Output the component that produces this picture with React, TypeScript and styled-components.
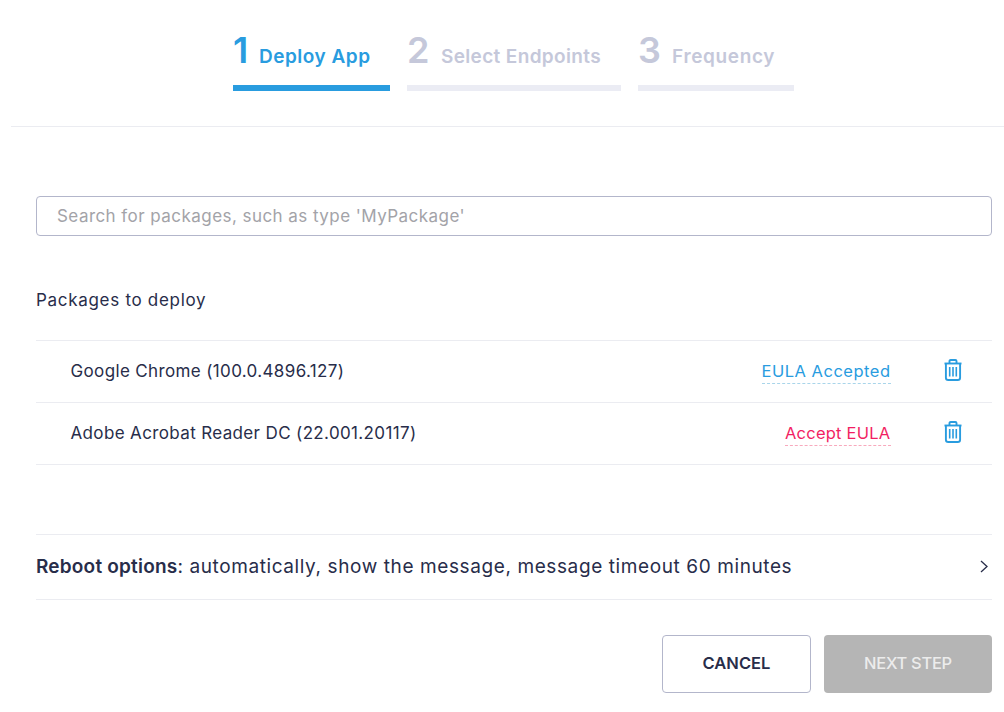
import React from "react";
import styled, { createGlobalStyle } from "styled-components";

const Global = createGlobalStyle`
  html, body { margin: 0; padding: 0; background: #fff; }
  body { font-family: Inter, "Liberation Sans", sans-serif; color: #282d4a; }
  * { box-sizing: border-box; }
`;

const Page = styled.div`
  width: 1004px;
  height: 712px;
  overflow: hidden;
  display: flex;
  flex-direction: column;
`;

const Header = styled.header`
  height: 127px;
  margin-left: 11px;
  border-bottom: 1px solid #ebecf1;
  display: flex;
  gap: 17px;
  padding: 30px 0 0 222px;
`;

const Step = styled.div<{ $w: number; $active?: boolean }>`
  width: ${(p) => p.$w}px;
  height: 61px;
  border-bottom: 6px solid ${(p) => (p.$active ? "#299cdf" : "#ebecf4")};
  color: ${(p) => (p.$active ? "#299cdf" : "#c5c8da")};
  display: flex;
  align-items: flex-start;
  flex-shrink: 0;
`;

const StepNumber = styled.span<{ $w: number }>`
  font-size: 36px;
  line-height: 40px;
  font-weight: 600;
  width: ${(p) => p.$w}px;
  flex-shrink: 0;
`;

const StepLabel = styled.span<{ $ls: number }>`
  font-size: 19px;
  line-height: 24px;
  font-weight: 600;
  margin-top: 15px;
  white-space: nowrap;
  letter-spacing: ${(p) => p.$ls}px;
`;

const Content = styled.main`
  flex: 1;
  padding: 69px 12px 0 36px;
  display: flex;
  flex-direction: column;
`;

const SearchBox = styled.input`
  width: 100%;
  height: 40px;
  border: 1px solid #b3b6cb;
  border-radius: 4px;
  padding: 0 20px;
  font-family: Inter, "Liberation Sans", sans-serif;
  font-size: 17px;
  letter-spacing: 0.45px;
  outline: none;
  &::placeholder { color: #a3a3a8; opacity: 1; }
`;

const SectionTitle = styled.h2`
  margin: 53px 0 29px;
  font-size: 17px;
  line-height: 22px;
  font-weight: 400;
  letter-spacing: 0.7px;
  color: #282d4a;
`;

const PackageList = styled.ul`
  list-style: none;
  margin: 0;
  padding: 0;
  border-top: 1px solid #ebecf1;
`;

const PackageRow = styled.li`
  height: 62px;
  border-bottom: 1px solid #ebecf1;
  display: flex;
  align-items: center;
  padding: 0 30px 2px 34.500px;
`;

const PackageName = styled.span`
  flex: 1;
  font-size: 17px;
  letter-spacing: 0.36px;
  color: #282d4a;
`;

const EulaLink = styled.a<{ $accepted?: boolean }>`
  color: ${(p) => (p.$accepted ? "#299cdf" : "#f21e63")};
  font-size: 16.5px;
  line-height: 20px;
  padding-bottom: 2px;
  letter-spacing: ${(p) => (p.$accepted ? 0.5 : 0.24)}px;
  border-bottom: 1px dashed ${(p) => (p.$accepted ? "#a9d5ea" : "#f8a9bd")};
  margin-right: 53.500px;
  margin-top: 4px;
`;

const TrashButton = styled.button`
  border: 0;
  background: none;
  padding: 0;
  width: 18px;
  height: 22px;
  display: flex;
  color: #299cdf;
  margin-top: -2px;
`;

const RebootRow = styled.div`
  margin-top: 69px;
  height: 66px;
  border-top: 1px solid #ebecf1;
  border-bottom: 1px solid #ebecf1;
  display: flex;
  align-items: center;
  justify-content: space-between;
  font-size: 19px;
  padding-right: 4.500px;
  padding-bottom: 2px;
  color: #282d4a;
  letter-spacing: 0.6px;
  strong { font-weight: 600; letter-spacing: 0.2px; }
`;

const Chevron = styled.svg`
  width: 8px;
  height: 13px;
  color: #282d4a;
`;

const Actions = styled.div`
  margin-top: 35px;
  display: flex;
  justify-content: flex-end;
  gap: 13px;
`;

const Button = styled.button<{ $w: number; $primary?: boolean }>`
  width: ${(p) => p.$w}px;
  height: 58px;
  border-radius: 4px;
  padding: 0 0 2px;
  font-family: Inter, "Liberation Sans", sans-serif;
  font-size: 16.5px;
  font-weight: ${(p) => (p.$primary ? 500 : 600)};
  letter-spacing: ${(p) => (p.$primary ? -0.3 : 0)}px;
  border: ${(p) => (p.$primary ? "0" : "1px solid #b3b6cb")};
  background: ${(p) => (p.$primary ? "#b5b5b5" : "#fff")};
  color: ${(p) => (p.$primary ? "#ececec" : "#282d4a")};
`;

const TrashIcon = () => (
  <svg width="18" height="22" viewBox="0 0 18 22" fill="none" stroke="currentColor" strokeWidth="1.9">
    <path d="M0.500 4.500h17" />
    <path d="M5.500 4.500V2c0-.7.5-1.050 1.150-1.050h4.700c.65 0 1.150.35 1.150 1.050v2.500" />
    <path d="M1.900 4.500v14.300c0 1.400 1 2.250 2.350 2.250h9.500c1.350 0 2.350-.85 2.350-2.250V4.500" />
    <path d="M5.700 8v9.500M9 8v9.500M12.300 8v9.500" strokeWidth="1.600" />
  </svg>
);

const packages = [
  { name: "Google Chrome (100.0.4896.127)", accepted: true },
  { name: "Adobe Acrobat Reader DC (22.001.20117)", accepted: false },
];

const steps = [
  { n: "1", label: "Deploy App", w: 157, nw: 26, ls: 0.5, active: true },
  { n: "2", label: "Select Endpoints", w: 214, nw: 34, ls: 0.35 },
  { n: "3", label: "Frequency", w: 156, nw: 34, ls: 0.65 },
];

export default function App() {
  return (
    <Page>
      <Global />
      <Header>
        {steps.map((s) => (
          <Step key={s.n} $w={s.w} $active={s.active}>
            <StepNumber $w={s.nw}>{s.n}</StepNumber>
            <StepLabel $ls={s.ls}>{s.label}</StepLabel>
          </Step>
        ))}
      </Header>
      <Content>
        <SearchBox placeholder="Search for packages, such as type 'MyPackage'" />
        <SectionTitle>Packages to deploy</SectionTitle>
        <PackageList>
          {packages.map((p) => (
            <PackageRow key={p.name}>
              <PackageName>{p.name}</PackageName>
              <EulaLink $accepted={p.accepted}>{p.accepted ? "EULA Accepted" : "Accept EULA"}</EulaLink>
              <TrashButton aria-label="Delete"><TrashIcon /></TrashButton>
            </PackageRow>
          ))}
        </PackageList>
        <RebootRow>
          <span><strong>Reboot options</strong>: automatically, show the message, message timeout 60 minutes</span>
          <Chevron viewBox="0 0 8 13" fill="none" stroke="currentColor" strokeWidth="1.300">
            <path d="M1 1l6 5.500-6 5.500" />
          </Chevron>
        </RebootRow>
        <Actions>
          <Button $w={149}>CANCEL</Button>
          <Button $w={168} $primary>NEXT STEP</Button>
        </Actions>
      </Content>
    </Page>
  );
}
